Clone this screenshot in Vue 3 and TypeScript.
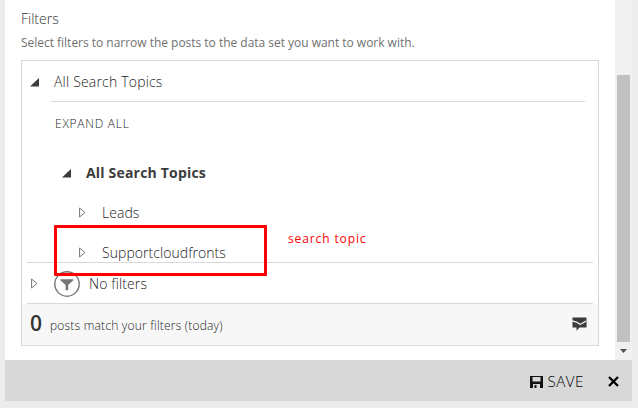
<script setup lang="ts">
import { ref } from 'vue'

interface Topic {
  id: number
  name: string
}

const topics = ref<Topic[]>([
  { id: 1, name: 'Leads' },
  { id: 2, name: 'Supportcloudfronts' },
])
const postCount = ref<number>(0)
</script>

<template>
  <div class="page">
    <div class="dialog">
      <div class="body">
        <main class="content">
          <h1 class="title">Filters</h1>
          <p class="hint">Select filters to narrow the posts to the data set you want to work with.</p>

          <section class="panel">
            <header class="group">
              <svg class="open" width="9" height="9" viewBox="0 0 9 9"><path d="M0 8.5L9 0V8.5Z" fill="#3b3b3b" /></svg>
              <span class="t-group">All Search Topics</span>
            </header>
            <div class="inner">
              <div class="expand">EXPAND ALL</div>
              <div class="root">
                <svg class="open" width="9" height="9" viewBox="0 0 9 9"><path d="M0 8.5L9 0V8.5Z" fill="#3b3b3b" /></svg>
                <span class="t-root">All Search Topics</span>
              </div>
              <div v-for="topic in topics" :key="topic.id" class="topic">
                <svg width="7" height="11" viewBox="0 0 7 11"><path d="M.6 1L6 5.5L.6 10Z" fill="none" stroke="#777" /></svg>
                <span>{{ topic.name }}</span>
              </div>
            </div>
            <div class="nofilters">
              <svg class="chev" width="7" height="11" viewBox="0 0 7 11"><path d="M.6 1L6 5.5L.6 10Z" fill="none" stroke="#777" /></svg>
              <svg class="funnel" width="26" height="26" viewBox="0 0 26 26">
                <circle cx="13" cy="13" r="12.2" fill="none" stroke="#777" stroke-width="1.4" />
                <path d="M6.3 8.2H19.3V9.2L14.2 14V19.3H11.6V14L6.3 9.2Z" fill="#777" />
              </svg>
              <span class="t-none">No filters</span>
            </div>
            <footer class="summary">
              <strong>{{ postCount }}</strong>
              <span class="t-posts">posts match your filters (today)</span>
              <svg class="mail" width="15" height="14" viewBox="0 0 15 14">
                <path d="M.5 .5H14.5V10.5H7.5L4.5 13.8V10.5H.5Z" fill="#3b3b3b" />
                <path d="M0 3.8L4.5 5L8 7.3L10 6.5L14 4" fill="none" stroke="#f7f7f7" stroke-width="1.3" />
              </svg>
            </footer>
          </section>
        </main>
        <aside class="scrollbar">
          <div class="thumb"></div>
          <svg width="7" height="4" viewBox="0 0 7 4"><path d="M0 0H7L3.5 4Z" fill="#505050" /></svg>
        </aside>
      </div>
      <footer class="actions">
        <button class="save">
          <svg width="13" height="12" viewBox="0 0 13 12">
            <path fill-rule="evenodd" d="M0 0H13V12H0ZM2.5 1V5.5H10.5V1ZM3 8V12H4.5V9H6.5V12H10V8Z" fill="#111" />
          </svg>
          <span>SAVE</span>
        </button>
        <button class="close" aria-label="Close">
          <svg width="11" height="11" viewBox="0 0 11 11"><path d="M1 1L10 10M10 1L1 10" stroke="#000" stroke-width="2.3" /></svg>
        </button>
      </footer>
    </div>
    <div class="marker"></div>
    <div class="note">search topic</div>
  </div>
</template>

<style>
body {
  margin: 0;
  overflow: hidden;
}
</style>

<style scoped>
.page {
  position: relative;
  box-sizing: border-box;
  width: 638px;
  height: 408px;
  padding: 0 6px 7px 5px;
  background: #ececec;
  font-family: 'Open Sans', 'Noto Sans', sans-serif;
  font-weight: 300;
  color: #1c1c1c;
  white-space: nowrap;
}
svg {
  display: block;
  flex: none;
}
.dialog {
  display: flex;
  flex-direction: column;
  height: 401px;
}
.body {
  display: flex;
  height: 360px;
  background: #fff;
}
.content {
  flex: 1;
  padding: 9px 16px 0;
}
.title {
  margin: 0;
  font-size: 14px;
  font-weight: 300;
  line-height: 20px;
  color: #333;
}
.hint {
  margin: 5px 0 0;
  font-size: 12px;
  line-height: 18px;
  font-weight: 400;
  letter-spacing: -0.02px;
  color: #707070;
}
.panel {
  box-sizing: border-box;
  width: 578px;
  height: 286px;
  margin-top: 8px;
  border: 1px solid #d8d8d8;
}
.group {
  display: flex;
  align-items: center;
  height: 40px;
  margin: 0 13px 0 29px;
  border-bottom: 1px solid #d8d8d8;
  font-size: 14px;
}
.t-group {
  letter-spacing: 0.19px;
}
.group .open {
  margin: 3px 15px 0 -21px;
}
.inner {
  height: 160px;
  margin: 0 5px;
  border-bottom: 1px solid #d8d8d8;
}
.expand {
  height: 44px;
  padding-left: 28px;
  font-size: 12px;
  line-height: 44px;
  letter-spacing: 0.75px;
}
.root {
  display: flex;
  align-items: center;
  gap: 15px;
  height: 52px;
  padding-left: 35px;
  font-size: 14px;
  font-weight: 700;
  color: #3b3b3b;
}
.t-root {
  letter-spacing: 0.19px;
}
.root .open {
  margin-top: 3px;
}
.topic {
  display: flex;
  align-items: center;
  gap: 16px;
  height: 40px;
  margin-top: -6px;
  padding-left: 52px;
  font-size: 14px;
  letter-spacing: 0.05px;
}
.topic + .topic {
  margin-top: 0;
}
.nofilters {
  display: flex;
  align-items: center;
  height: 40px;
  margin: 0 5px;
  border-bottom: 1px solid #d8d8d8;
  font-size: 14px;
}
.t-none {
  letter-spacing: 0.12px;
}
.chev {
  margin-left: 4px;
}
.funnel {
  margin: 2px 9px 0 16px;
}
.summary {
  display: flex;
  align-items: center;
  height: 41px;
  padding: 0 11px 0 8px;
  background: #f7f7f7;
  font-size: 12px;
}
.summary strong {
  width: 20px;
  padding-bottom: 4px;
  font-size: 21px;
  font-weight: 600;
  color: #333;
}
.t-posts {
  padding-top: 1px;
  letter-spacing: 0.2px;
}
.mail {
  margin: 0 0 1px auto;
}
.scrollbar {
  display: flex;
  flex-direction: column;
  align-items: center;
  box-sizing: border-box;
  width: 17px;
  padding: 75px 2px 0;
  background: #f0f0f0;
}
.thumb {
  width: 13px;
  height: 267px;
  margin-bottom: 7px;
  background: #c1c1c1;
}
.actions {
  display: flex;
  align-items: center;
  justify-content: flex-end;
  box-sizing: border-box;
  height: 41px;
  padding: 2px 13px 0 0;
  background: #d8d8d8;
}
button {
  display: flex;
  align-items: center;
  gap: 4px;
  padding: 0;
  border: 0;
  background: none;
  font: inherit;
  color: #000;
}
.save {
  margin-right: 24px;
  font-size: 15px;
  letter-spacing: 0.6px;
}
.save span {
  margin-top: -2px;
}
.marker {
  position: absolute;
  left: 54px;
  top: 225px;
  box-sizing: border-box;
  width: 213px;
  height: 51px;
  border: 3px solid #f00;
  border-radius: 1px;
}
.note {
  position: absolute;
  left: 288px;
  top: 231px;
  font-size: 12px;
  font-weight: 400;
  line-height: 16px;
  letter-spacing: 0.88px;
  color: #f00;
}
</style>
